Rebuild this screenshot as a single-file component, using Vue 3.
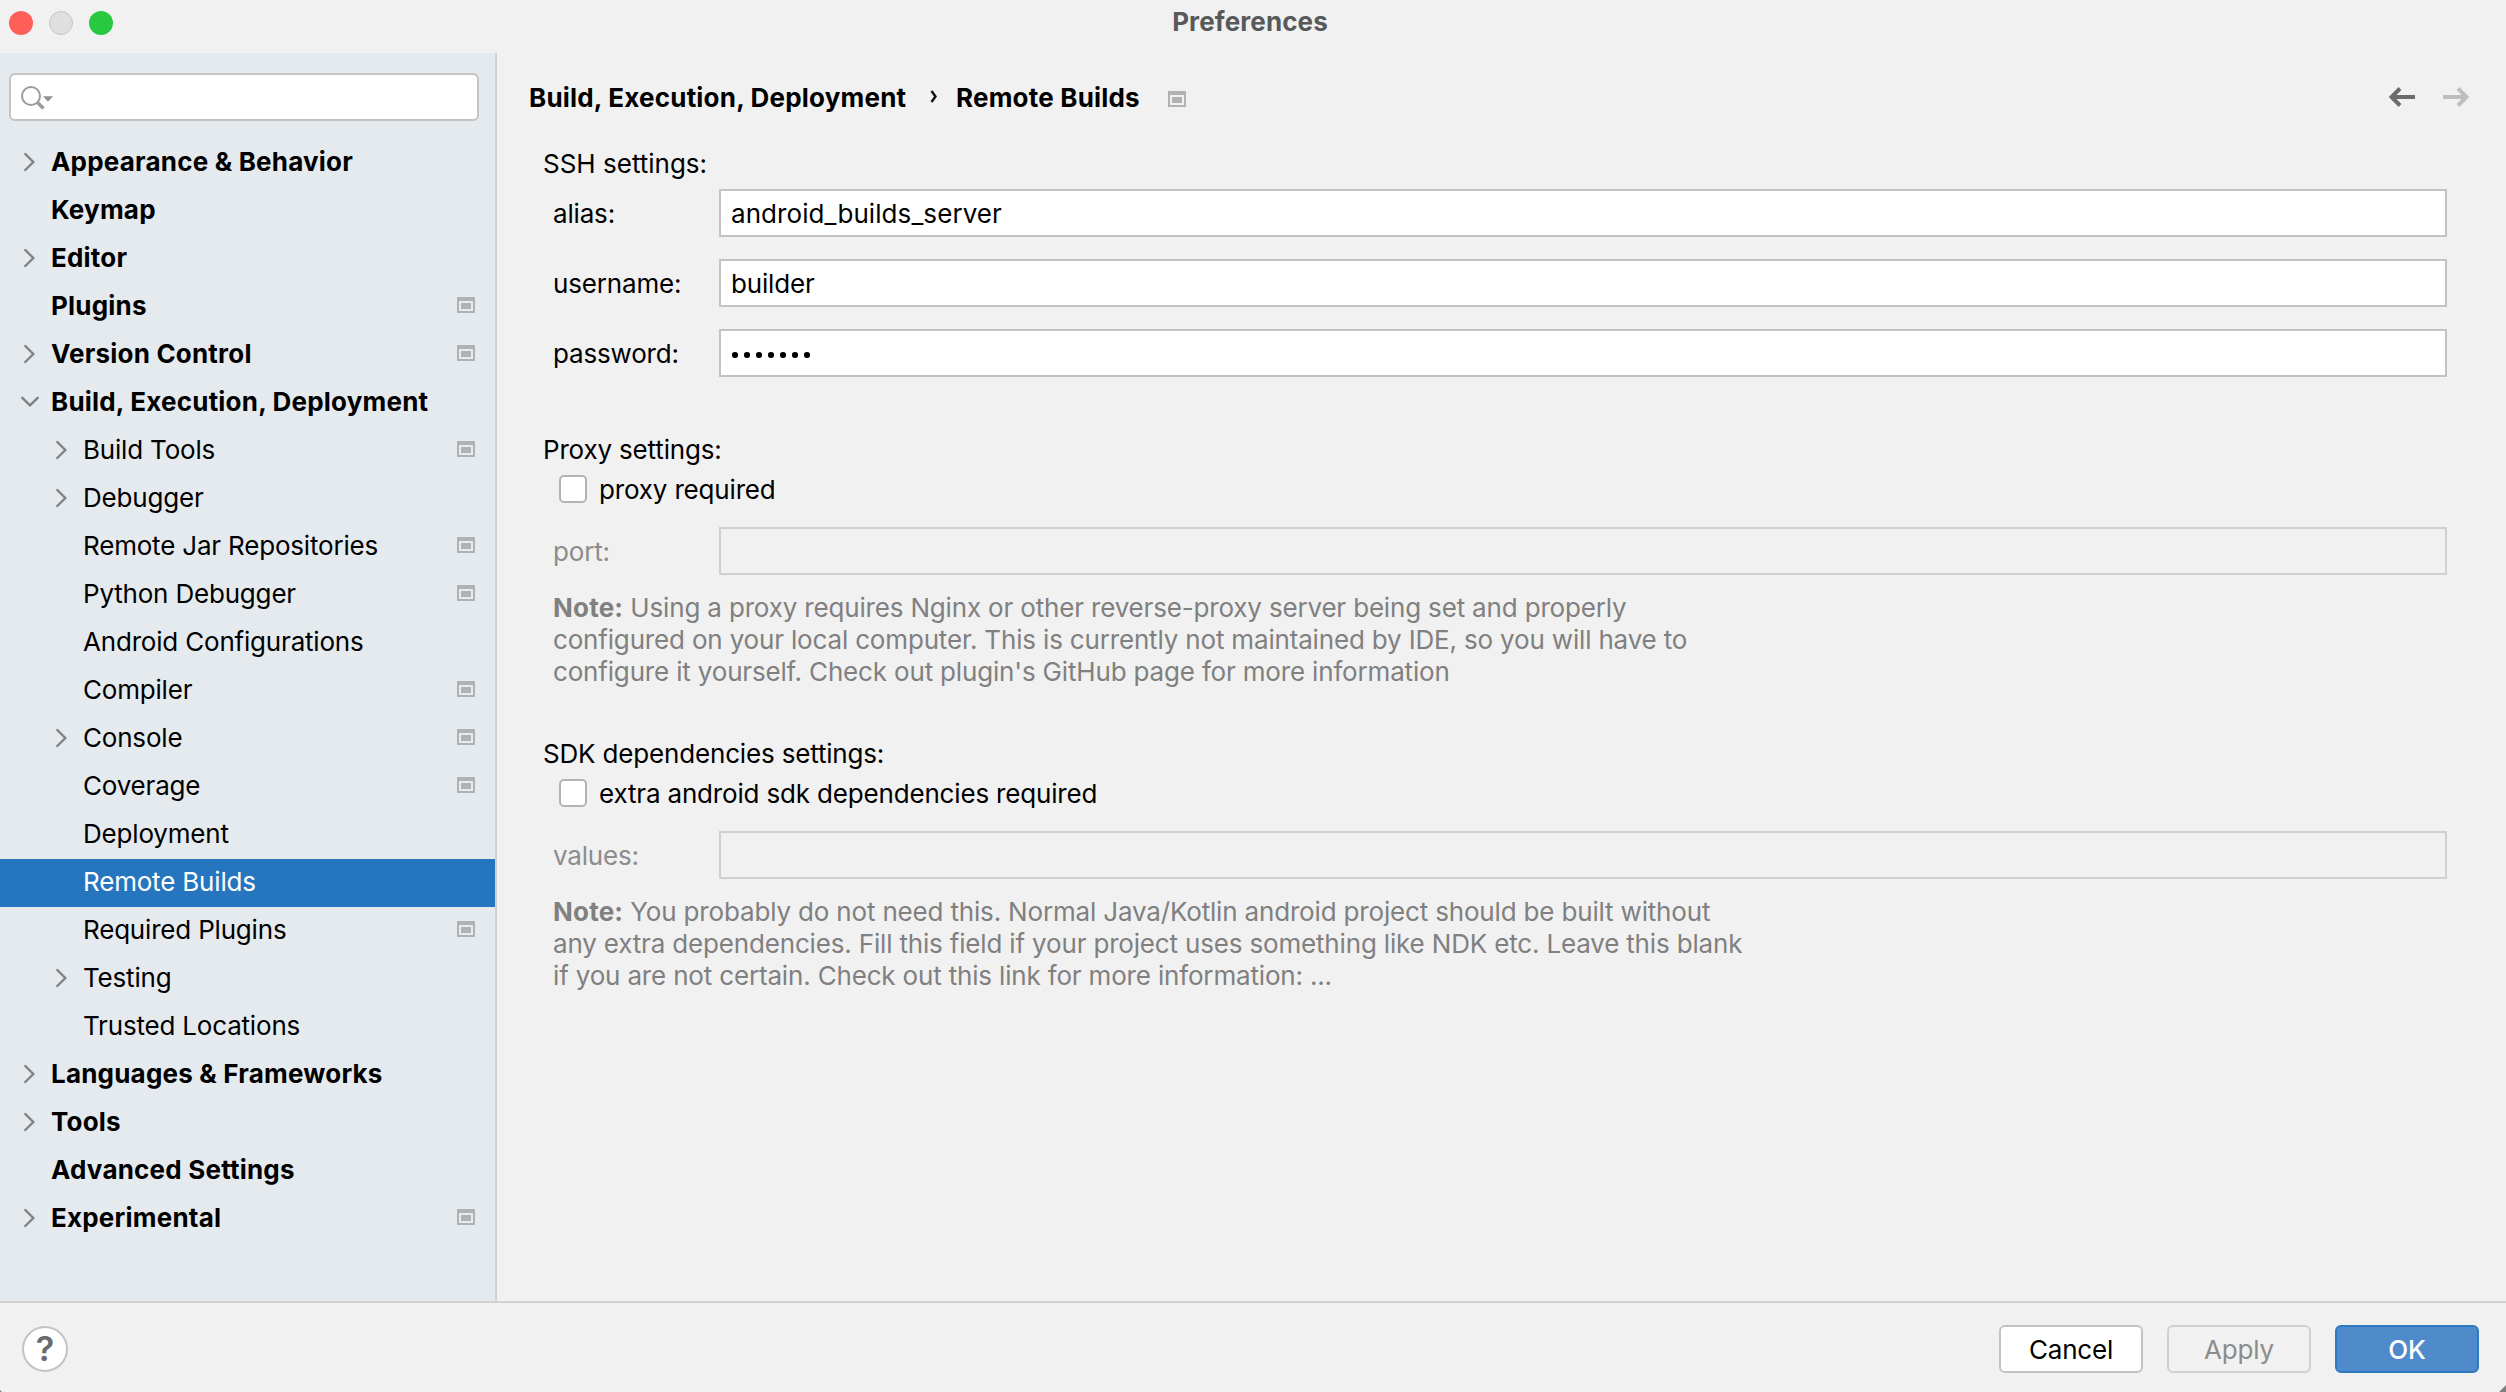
<script setup>
const tree = [
  { label: 'Appearance & Behavior', level: 0, arrow: 'right' },
  { label: 'Keymap', level: 0 },
  { label: 'Editor', level: 0, arrow: 'right' },
  { label: 'Plugins', level: 0, badge: true },
  { label: 'Version Control', level: 0, arrow: 'right', badge: true },
  { label: 'Build, Execution, Deployment', level: 0, arrow: 'down' },
  { label: 'Build Tools', level: 1, arrow: 'right', badge: true },
  { label: 'Debugger', level: 1, arrow: 'right' },
  { label: 'Remote Jar Repositories', level: 1, badge: true },
  { label: 'Python Debugger', level: 1, badge: true },
  { label: 'Android Configurations', level: 1 },
  { label: 'Compiler', level: 1, badge: true },
  { label: 'Console', level: 1, arrow: 'right', badge: true },
  { label: 'Coverage', level: 1, badge: true },
  { label: 'Deployment', level: 1 },
  { label: 'Remote Builds', level: 1, selected: true },
  { label: 'Required Plugins', level: 1, badge: true },
  { label: 'Testing', level: 1, arrow: 'right' },
  { label: 'Trusted Locations', level: 1 },
  { label: 'Languages & Frameworks', level: 0, arrow: 'right' },
  { label: 'Tools', level: 0, arrow: 'right' },
  { label: 'Advanced Settings', level: 0 },
  { label: 'Experimental', level: 0, arrow: 'right', badge: true },
]
</script>

<template>
  <div class="window">
    <header class="titlebar">
      <span class="light red"></span>
      <span class="light gray"></span>
      <span class="light green"></span>
      <h1 class="title">Preferences</h1>
    </header>

    <div class="body">
      <aside class="sidebar">
        <div class="search">
          <svg width="34" height="26" viewBox="0 0 34 26">
            <circle cx="11" cy="11" r="9" fill="none" stroke="#999b9d" stroke-width="2" />
            <path d="M17 17 L23.5 23.5" stroke="#999b9d" stroke-width="3.4" />
            <path d="M23 11.3 H33 L28 16.8 Z" fill="#8f9193" />
          </svg>
        </div>
        <ul class="tree">
          <li
            v-for="item in tree"
            :key="item.label"
            class="row"
            :class="{ child: item.level === 1, selected: item.selected }"
          >
            <span class="arrow">
              <svg v-if="item.arrow === 'right'" width="20" height="20" viewBox="0 0 20 20">
                <path d="M6.3 2 L14.3 10 L6.3 18" />
              </svg>
              <svg v-else-if="item.arrow === 'down'" width="20" height="20" viewBox="0 0 20 20">
                <path d="M3.3 5.8 L11 13.3 L18.7 5.8" />
              </svg>
            </span>
            <span class="label">{{ item.label }}</span>
            <svg v-if="item.badge" class="badge" width="18" height="16" viewBox="0 0 18 16">
              <path fill-rule="evenodd" d="M0 0H18V16H0Z M2 4V14H16V4Z M4 6H14V12H4Z" />
            </svg>
          </li>
        </ul>
      </aside>

      <main class="content">
        <div class="crumbs">
          <span class="crumb first">Build, Execution, Deployment</span>
          <svg class="sep" width="8" height="16" viewBox="0 0 8 16">
            <path d="M1.5 2 L5.5 7.5 L1.5 13" />
          </svg>
          <span class="crumb">Remote Builds</span>
          <svg class="badge" width="18" height="16" viewBox="0 0 18 16">
            <path fill-rule="evenodd" d="M0 0H18V16H0Z M2 4V14H16V4Z M4 6H14V12H4Z" />
          </svg>
          <svg class="history" width="80" height="20" viewBox="0 0 80 20">
            <path d="M26 10 H3 M11 1.5 L2.5 10 L11 18.5" stroke="#6a6b6c" />
            <path d="M54 10 H77 M69 1.5 L77.5 10 L69 18.5" stroke="#bebebe" />
          </svg>
        </div>

        <section class="group ssh">
          <h2>SSH settings:</h2>
          <div class="field"><label>alias:</label><div class="input loose">android_builds_server</div></div>
          <div class="field"><label>username:</label><div class="input">builder</div></div>
          <div class="field">
            <label>password:</label>
            <div class="input dots"><i v-for="n in 7" :key="n"></i></div>
          </div>
        </section>

        <section class="group">
          <h2>Proxy settings:</h2>
          <div class="check"><span class="box"></span><span class="caption">proxy required</span></div>
          <div class="field disabled"><label>port:</label><div class="input"></div></div>
          <p class="note">
            <span><b>Note:</b> Using a proxy requires Nginx or other reverse-proxy server being set and properly</span>
            <span>configured on your local computer. This is currently not maintained by IDE, so you will have to</span>
            <span>configure it yourself. Check out plugin's GitHub page for more information</span>
          </p>
        </section>

        <section class="group">
          <h2>SDK dependencies settings:</h2>
          <div class="check"><span class="box"></span><span class="caption">extra android sdk dependencies required</span></div>
          <div class="field disabled"><label>values:</label><div class="input"></div></div>
          <p class="note">
            <span><b>Note:</b> You probably do not need this. Normal Java/Kotlin android project should be built without</span>
            <span>any extra dependencies. Fill this field if your project uses something like NDK etc. Leave this blank</span>
            <span>if you are not certain. Check out this link for more information: ...</span>
          </p>
        </section>
      </main>
    </div>

    <footer class="footer">
      <button class="help">?</button>
      <button class="btn">Cancel</button>
      <button class="btn off">Apply</button>
      <button class="btn primary">OK</button>
    </footer>
  </div>
</template>

<style>
body { margin: 0; background: #808080; }
</style>

<style scoped>
* { box-sizing: border-box; }
.window {
  width: 2506px;
  height: 1392px;
  display: flex;
  flex-direction: column;
  overflow: hidden;
  background: #f1f1f1;
  clip-path: polygon(0 0, 100% 0, 100% calc(100% - 7px), calc(100% - 7px) 100%, 2px 100%, 0 calc(100% - 2px));
  color: #000;
  font-family: Inter, "Liberation Sans", sans-serif;
  font-size: 26px;
  line-height: 32px;
  letter-spacing: -0.17px;
  white-space: nowrap;
}
.titlebar {
  position: relative;
  flex: 0 0 53px;
  display: flex;
  gap: 16px;
  padding: 11px 9px 0;
}
.light { width: 24px; height: 24px; border-radius: 50%; }
.red { background: #fe5f58; }
.gray { background: #dddfe0; border: 1px solid #c2c3c4; }
.green { background: #28c941; }
.title {
  position: absolute;
  left: 0;
  right: 6px;
  top: 6px;
  margin: 0;
  text-align: center;
  font-size: 26px;
  font-weight: 700;
  line-height: 32px;
  letter-spacing: 0.1px;
  color: #58595b;
}
.body { flex: 1; display: flex; min-height: 0; }
.sidebar {
  width: 497px;
  padding-top: 20px;
  background: #e5eaee;
  border-right: 2px solid #d0d1d3;
}
.search {
  width: 470px;
  height: 48px;
  margin-left: 9px;
  padding: 10px 0 0 9px;
  background: #fff;
  border: 2px solid #c3c3c3;
  border-radius: 6px;
}
.search svg { display: block; }
.tree { list-style: none; margin: 18px 0 0; padding: 0; }
.row {
  height: 48px;
  display: flex;
  align-items: center;
  padding: 0 20px 3px 19px;
  font-weight: 700;
  letter-spacing: 0.2px;
}
.child { padding-left: 51px; font-weight: 400; letter-spacing: -0.19px; }
.selected { background: #2675bf; color: #fff; }
.arrow { width: 32px; height: 20px; display: flex; }
.arrow path { fill: none; stroke: #7f8183; stroke-width: 2.4; stroke-linecap: round; }
.label { flex: 1; }
.badge { fill: #afb1b3; flex: none; margin-bottom: 1px; }
.content { flex: 1; padding: 26px 37px 0 32px; }
.crumbs { display: flex; align-items: center; height: 36px; font-weight: 700; letter-spacing: 0.2px; }
.crumb { padding-top: 2px; }
.crumb.first { width: 377px; }
.sep { margin: 0 18px 0 24px; }
.sep path { fill: none; stroke: #111; stroke-width: 2.4; }
.crumbs .badge { margin: 4px 0 0 28px; }
.history { margin-left: auto; }
.history path { fill: none; stroke-width: 4; }
.group { margin-left: 14px; margin-right: 22px; height: 304px; }
.ssh { height: 285px; margin-top: 33px; }
h2 { margin: 0; height: 32px; padding-top: 1px; font-size: 26px; font-weight: 400; line-height: 32px; }
.ssh h2 { padding-top: 0; letter-spacing: 0; }
.field { display: flex; align-items: center; padding-left: 10px; height: 48px; margin-bottom: 22px; }
h2 + .field { margin-top: 9px; }
.field label { width: 166px; padding-top: 2px; }
.input {
  flex: 1;
  height: 48px;
  display: flex;
  align-items: center;
  padding: 2px 0 0 10px;
  background: #fff;
  border: 2px solid #c3c3c3;
}
.loose { letter-spacing: 0.08px; }
.dots { gap: 6.4px; padding: 4px 0 0 11px; }
.dots i { width: 5.6px; height: 5.6px; border-radius: 50%; background: #000; }
.check { display: flex; align-items: center; height: 32px; margin: 8px 0 22px 16px; }
.caption { padding-top: 2px; }
.box { width: 28px; height: 28px; margin-right: 12px; background: #fff; border: 2px solid #afb4b8; border-radius: 5px; }
.disabled { color: #8c8c8c; margin-bottom: 17px; }
.disabled .input { background: #f1f1f1; border-color: #d0d0d0; }
.note { margin: 0 0 0 10px; color: #808080; display: flex; flex-direction: column; align-items: flex-start; }
.note b { letter-spacing: 0.2px; }
.footer {
  flex: 0 0 91px;
  display: flex;
  align-items: center;
  gap: 24px;
  padding: 3px 27px 0 22px;
  border-top: 2px solid #d0d1d3;
}
button { font: inherit; letter-spacing: inherit; color: inherit; padding: 0; }
.help {
  width: 46px;
  height: 46px;
  margin-right: auto;
  border: 2px solid #c3c3c3;
  border-radius: 50%;
  background: #fff;
  color: #6a6b6c;
  font-size: 34px;
  font-weight: 600;
  line-height: 40px;
}
.btn { width: 144px; height: 48px; padding-top: 2px; border: 2px solid #c3c3c3; border-radius: 6px; background: #fff; }
.off { background: #f1f1f1; border-color: #d0d0d0; color: #8c8c8c; }
.primary { background: #4f8bca; border-color: #2f79c1; color: #fff; font-weight: 500; }
</style>
